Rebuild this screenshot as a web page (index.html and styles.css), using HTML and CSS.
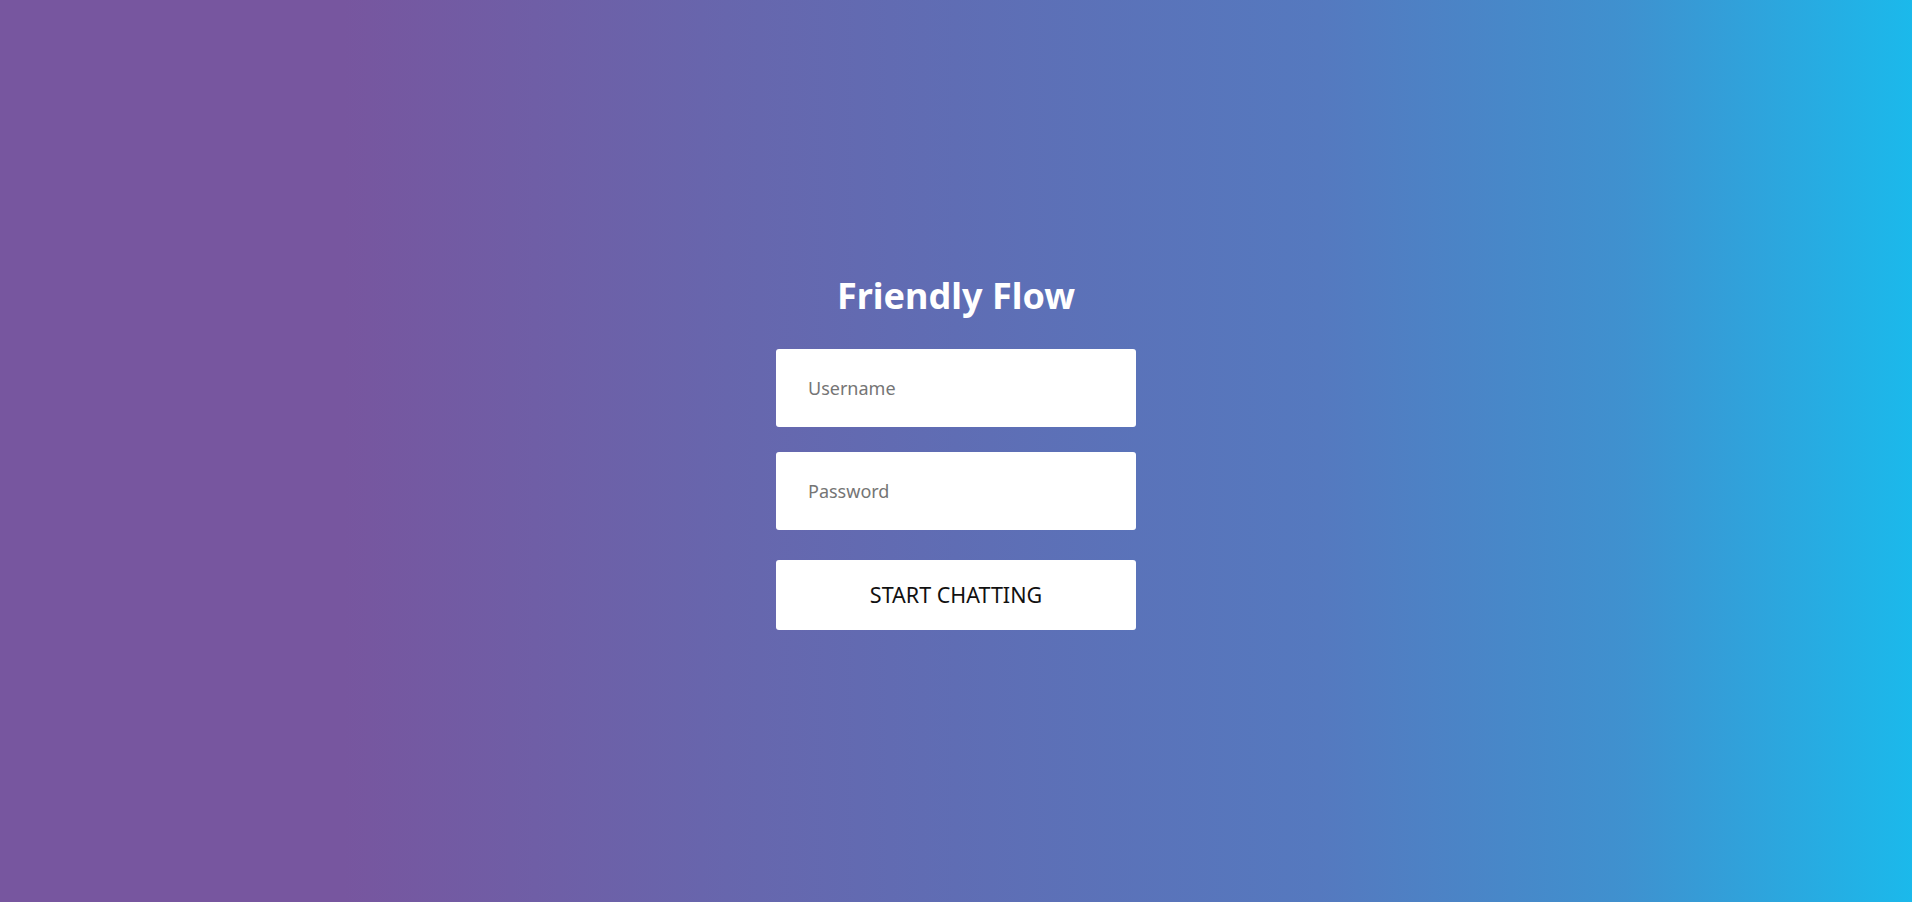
FILE: index.html
```html
<!DOCTYPE html>
<html lang="en">
<head>
<meta charset="utf-8">
<title>Friendly Flow</title>
<link rel="stylesheet" href="styles.css">
</head>
<body>
<main class="page">
  <form class="login">
    <h1 class="title">Friendly Flow</h1>
    <input class="field" type="text" placeholder="Username">
    <input class="field field-gap" type="password" placeholder="Password">
    <button class="start" type="button">START CHATTING</button>
  </form>
</main>
</body>
</html>
```
FILE: styles.css
```css
html, body {
  margin: 0;
  height: 100%;
}
body {
  font-family: "Noto Sans", "Open Sans", sans-serif;
  background: linear-gradient(to right, #77569f 0%, #77569f 18%, #6766ad 38%, #5f6db4 50%, #5579bf 69%, #3f91cf 85%, #1bb9eb 100%);
}
.page {
  height: 100%;
  display: flex;
  align-items: center;
  justify-content: center;
}
.login {
  width: 360px;
  display: flex;
  flex-direction: column;
  margin-top: 1px;
}
.title {
  margin: 0 0 31px;
  color: #fff;
  font-size: 36px;
  font-weight: 700;
  line-height: 44px;
  text-align: center;
}
.field {
  box-sizing: border-box;
  height: 78px;
  border: none;
  border-radius: 3px;
  background: #fff;
  padding: 0 32px;
  font-family: inherit;
  font-size: 18px;
  color: #333;
  outline: none;
}
.field::placeholder {
  color: #757575;
}
.field-gap {
  margin-top: 25px;
}
.start {
  margin-top: 30px;
  height: 70px;
  border: none;
  border-radius: 3px;
  background: #fff;
  font-family: inherit;
  font-size: 21.5px;
  color: #111;
  cursor: pointer;
}
```
